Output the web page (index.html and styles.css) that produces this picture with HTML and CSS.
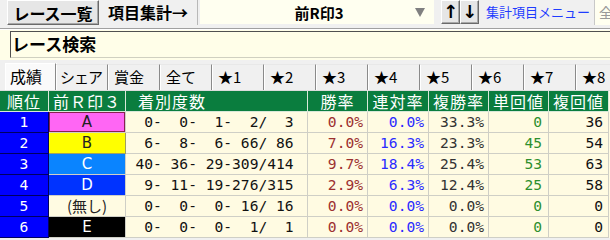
FILE: index.html
```html
<!DOCTYPE html>
<html lang="ja">
<head>
<meta charset="utf-8">
<link rel="stylesheet" href="styles.css">
</head>
<body>
<div class="app">
  <div class="toolbar">
    <div class="btn raised list-btn">レース一覧</div>
    <div class="btn flat agg-btn">項目集計→</div>
    <div class="combo"><span class="combo-text">前R印3</span><span class="combo-arrow"></span></div>
    <div class="btn raised arrow-btn up-btn">↑</div>
    <div class="btn raised arrow-btn">↓</div>
    <div class="menu-link">集計項目メニュー</div>
    <div class="side-box">全</div>
  </div>
  <div class="sep-line"></div>
  <div class="search-panel">
    <div class="search-box">レース検索</div>
  </div>
  <div class="tabs">
    <div class="tab active">成績</div>
    <div class="tab narrow">シェア</div>
    <div class="tab">賞金</div>
    <div class="tab">全て</div>
    <div class="tab">★1</div>
    <div class="tab">★2</div>
    <div class="tab">★3</div>
    <div class="tab">★4</div>
    <div class="tab">★5</div>
    <div class="tab">★6</div>
    <div class="tab">★7</div>
    <div class="tab">★8</div>
  </div>
  <div class="grid">
    <div class="h">順位</div>
    <div class="h">前Ｒ印３</div>
    <div class="h h-left">着別度数</div>
    <div class="h">勝率</div>
    <div class="h">連対率</div>
    <div class="h">複勝率</div>
    <div class="h">単回値</div>
    <div class="h">複回値</div>

    <div class="c rank">1</div>
    <div class="c mark m-a">A</div>
    <div class="c num cnt"> 0-  0-  1-  2/  3</div>
    <div class="c num win">0.0%</div>
    <div class="c num ren">0.0%</div>
    <div class="c num fuku">33.3%</div>
    <div class="c num tan">0</div>
    <div class="c num fk">36</div>

    <div class="c rank">2</div>
    <div class="c mark m-b">B</div>
    <div class="c num cnt"> 6-  8-  6- 66/ 86</div>
    <div class="c num win">7.0%</div>
    <div class="c num ren">16.3%</div>
    <div class="c num fuku">23.3%</div>
    <div class="c num tan">45</div>
    <div class="c num fk">54</div>

    <div class="c rank">3</div>
    <div class="c mark m-c">C</div>
    <div class="c num cnt">40- 36- 29-309/414</div>
    <div class="c num win">9.7%</div>
    <div class="c num ren">18.4%</div>
    <div class="c num fuku">25.4%</div>
    <div class="c num tan">53</div>
    <div class="c num fk">63</div>

    <div class="c rank">4</div>
    <div class="c mark m-d">D</div>
    <div class="c num cnt"> 9- 11- 19-276/315</div>
    <div class="c num win">2.9%</div>
    <div class="c num ren">6.3%</div>
    <div class="c num fuku">12.4%</div>
    <div class="c num tan">25</div>
    <div class="c num fk">58</div>

    <div class="c rank">5</div>
    <div class="c mark m-none">(無し)</div>
    <div class="c num cnt"> 0-  0-  0- 16/ 16</div>
    <div class="c num win">0.0%</div>
    <div class="c num ren">0.0%</div>
    <div class="c num fuku">0.0%</div>
    <div class="c num tan">0</div>
    <div class="c num fk">0</div>

    <div class="c rank">6</div>
    <div class="c mark m-e">E</div>
    <div class="c num cnt"> 0-  0-  0-  1/  1</div>
    <div class="c num win">0.0%</div>
    <div class="c num ren">0.0%</div>
    <div class="c num fuku">0.0%</div>
    <div class="c num tan">0</div>
    <div class="c num fk">0</div>
  </div>
</div>
</body>
</html>
```
FILE: styles.css
```css
* { box-sizing: border-box; }
html, body { margin: 0; padding: 0; }
body {
  width: 610px;
  height: 240px;
  overflow: hidden;
  background: #f0f0f0;
  font-family: "Noto Sans CJK JP", "Noto Sans", sans-serif;
  color: #000;
}
.app { width: 610px; }

/* toolbar */
.toolbar {
  display: flex;
  align-items: stretch;
  height: 25px;
  padding-left: 7px;
}
.btn {
  display: flex;
  align-items: center;
  justify-content: center;
  font-weight: bold;
  font-size: 16px;
  line-height: 1;
}
.raised {
  background: #e6e6e6;
  border-top: 1px solid #ffffff;
  border-left: 1px solid #ffffff;
  border-right: 1px solid #6a6a6a;
  border-bottom: 1px solid #6a6a6a;
  box-shadow: inset -1px -1px 0 #a8a8a8;
}
.list-btn { width: 92px; }
.agg-btn {
  width: 99px;
  border-right: 1px solid #b8b8b8;
  padding-bottom: 1px;
}
.combo {
  width: 234px;
  margin-left: 2px;
  height: 24px;
  background: #fffff0;
  position: relative;
  display: flex;
  align-items: center;
  justify-content: center;
}
.combo-text {
  font-weight: bold;
  font-size: 15px;
  margin-left: 4px;
}
.combo-arrow {
  position: absolute;
  right: 9px;
  top: 8px;
  width: 0;
  height: 0;
  border-left: 5px solid transparent;
  border-right: 5px solid transparent;
  border-top: 9px solid #808080;
}
.arrow-btn {
  width: 19px;
  height: 24px;
  font-size: 18px;
  font-family: "DejaVu Sans", sans-serif;
}
.up-btn { margin-left: 7px; }
.menu-link {
  margin-left: 7px;
  width: 108px;
  color: #1f3cff;
  font-size: 13px;
  line-height: 24px;
  white-space: nowrap;
  overflow: hidden;
}
.side-box {
  margin-left: 0;
  flex: 1;
  border-left: 1px solid #c8c8c8;
  background: #fffff0;
  color: #999;
  font-size: 14px;
  line-height: 24px;
  padding-left: 4px;
  overflow: hidden;
  white-space: nowrap;
}
.sep-line {
  height: 5px;
  border-bottom: 1px solid #ffffff;
  box-shadow: inset 0 -1px 0 #a0a0a0;
}

/* search panel */
.search-panel {
  height: 30px;
  background: #fffee8;
  padding: 1px 0 2px 10px;
}
.search-box {
  height: 27px;
  border-top: 1px solid #505050;
  border-left: 1px solid #505050;
  border-bottom: 1px solid #d0d0c0;
  font-weight: bold;
  font-size: 17px;
  line-height: 24px;
  padding-left: 1px;
  background: #fffee8;
}

/* tabs */
.tabs {
  display: flex;
  height: 31px;
  padding: 3px 0 0 5px;
  border-bottom: 1px solid #dcdcdc;
}
.tab {
  flex: 0 0 52px;
  height: 26px;
  margin-top: 1px;
  font-size: 15px;
  line-height: 24px;
  padding-left: 6px;
  border-top: 1px solid #e8e8e8;
  border-right: 1px solid #8a8a8a;
  box-shadow: 1px 0 0 #ffffff;
  white-space: nowrap;
  overflow: hidden;
}
.tab.narrow { padding-left: 4px; letter-spacing: -1px; }
.tab.active {
  flex-basis: 51px;
  margin-top: 0;
  background: #fafafa;
  border-left: 1px solid #ffffff;
  border-top: 1px solid #ffffff;
  padding-left: 4px;
  height: 27px;
  font-size: 16px;
}

/* grid */
.grid {
  display: grid;
  grid-template-columns: 49px 77px 182px 60px 61px 60px 60px 60px;
  grid-auto-rows: 21px;
  background: #fffbe2;
}
.h {
  background: #0a7d3e;
  color: #fff;
  font-size: 16px;
  letter-spacing: 1px;
  line-height: 20px;
  text-align: center;
  border-right: 1px solid #d8e8d8;
  border-bottom: 1px solid #d8e8d8;
  white-space: nowrap;
}
.h-left { text-align: left; padding-left: 12px; }
.c {
  border-right: 1px solid #cfcfc6;
  border-bottom: 1px solid #cfcfc6;
  line-height: 20px;
  white-space: pre;
  overflow: hidden;
}
.num {
  font-family: "DejaVu Sans Mono", "Liberation Mono", monospace;
  font-size: 14.6px;
  text-align: right;
  padding-right: 4px;
}
.cnt { text-align: center; padding-right: 4px; color: #111; }
.win { color: #9c3030; }
.ren { color: #2b2bff; }
.fuku { color: #333; }
.tan { color: #2e8f2e; padding-right: 6px; }
.fk { color: #111; padding-right: 5px; }
.rank {
  background: #0000ff;
  color: #fff;
  text-align: center;
  font-family: "DejaVu Sans Mono", monospace;
  font-size: 14.6px;
  border-right: 1px solid #000060;
  border-bottom: 1px solid #000060;
}
.mark {
  text-align: center;
  font-size: 15px;
  font-family: "DejaVu Sans", "Noto Sans CJK JP", sans-serif;
}
.m-a { background: #ff66f4; color: #222; box-shadow: inset 0 0 0 1px #8a2050; }
.m-b { background: #ffff00; color: #222; border-color: #a0a060; }
.m-c { background: #0a84ff; color: #fff; }
.m-d { background: #0033ff; color: #fff; }
.m-none { background: #fffbe2; color: #222; font-family: "Noto Sans CJK JP", sans-serif; }
.m-e { background: #000; color: #fff; }
```
